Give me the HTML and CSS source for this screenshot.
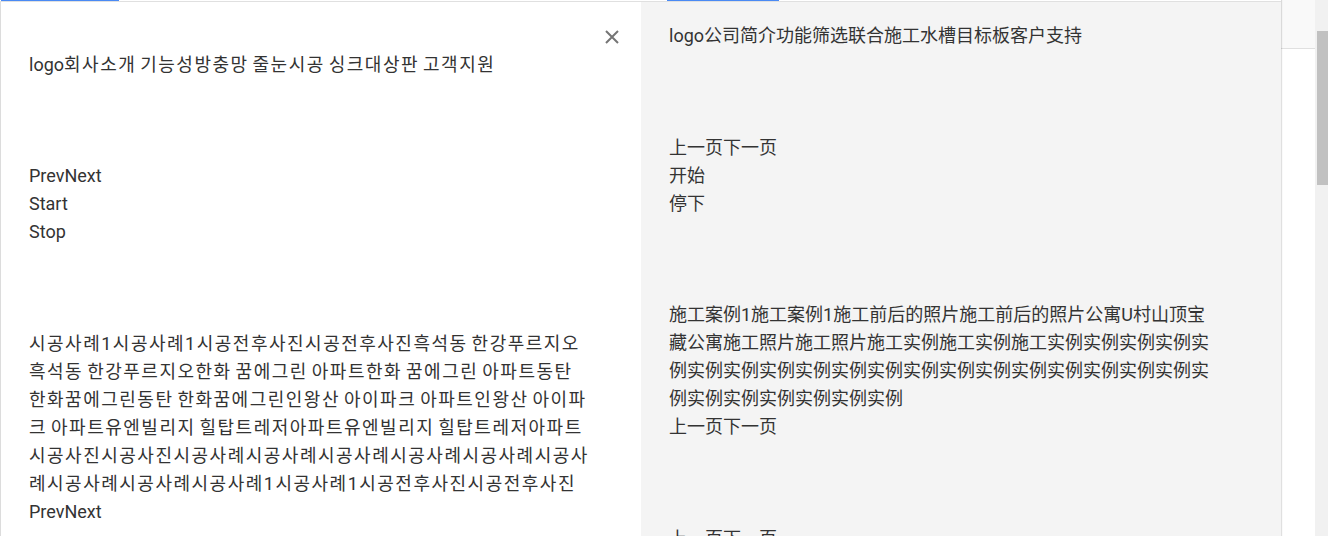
FILE: index.html
```html
<!DOCTYPE html>
<html lang="ko">
<head>
<meta charset="utf-8">
<title>Translation compare</title>
<link rel="stylesheet" href="styles.css">
</head>
<body>
<div class="app">
  <section class="pane pane-left" lang="ko">
    <div class="tabbar"><span class="tab-ind tab-ind-left"></span></div>
    <div class="pane-body body-left">
      <div class="close-row">
        <button class="close" aria-label="close">
          <svg width="14" height="14" viewBox="0 0 14 14"><path d="M1 1L13 13M13 1L1 13" stroke="#757575" stroke-width="2" fill="none"/></svg>
        </button>
      </div>
      <div class="line gap-after-l">logo<span class="ko">회사소개 기능성방충망 줄눈시공 싱크대상판 고객지원</span></div>
      <div class="line">PrevNext</div>
      <div class="line">Start</div>
      <div class="line gap-after">Stop</div>
      <p class="para ko">시공사례1시공사례1시공전후사진시공전후사진흑석동 한강푸르지오<br>흑석동 한강푸르지오한화 꿈에그린 아파트한화 꿈에그린 아파트동탄<br>한화꿈에그린동탄 한화꿈에그린인왕산 아이파크 아파트인왕산 아이파<br>크 아파트유엔빌리지 힐탑트레저아파트유엔빌리지 힐탑트레저아파트<br>시공사진시공사진시공사례시공사례시공사례시공사례시공사례시공사<br>례시공사례시공사례시공사례1시공사례1시공전후사진시공전후사진</p>
      <div class="line">PrevNext</div>
    </div>
  </section>
  <section class="pane pane-right" lang="zh">
    <div class="tabbar"><span class="tab-ind tab-ind-right"></span></div>
    <div class="pane-body body-right">
      <div class="line gap-after">logo公司简介功能筛选联合施工水槽目标板客户支持</div>
      <div class="line">上一页下一页</div>
      <div class="line">开始</div>
      <div class="line gap-after2">停下</div>
      <p class="para">施工案例1施工案例1施工前后的照片施工前后的照片公寓U村山顶宝藏公寓施工照片施工照片施工实例施工实例施工实例实例实例实例实例实例实例实例实例实例实例实例实例实例实例实例实例实例实例实例实例实例实例实例实例实例</p>
      <div class="line gap-after">上一页下一页</div>
      <div class="line">上一页下一页</div>
    </div>
  </section>
  <aside class="side">
    <div class="side-top"></div>
  </aside>
  <div class="scrollbar"><div class="thumb"></div></div>
</div>
</body>
</html>
```
FILE: styles.css
```css
html, body {
  margin: 0;
  padding: 0;
  background: #ffffff;
}
.app {
  display: flex;
  height: 536px;
  overflow: hidden;
  font-size: 18px;
  line-height: 28px;
  color: #333333;
}
.pane {
  display: flex;
  flex-direction: column;
  flex: none;
}
.pane-left {
  width: 641px;
  background: #ffffff;
  font-family: Roboto, "Noto Sans CJK KR", sans-serif;
}
.pane-right {
  width: 640px;
  background: #f4f4f4;
  font-family: Roboto, "Noto Sans CJK SC", sans-serif;
  box-shadow: 1px 0 1px rgba(0,0,0,0.12);
  position: relative;
  z-index: 1;
}
.tabbar {
  height: 1px;
  border-bottom: 1px solid #e0e0e0;
  display: flex;
  flex: none;
  background: #ffffff;
}
.tab-ind {
  display: block;
  width: 112px;
  height: 1px;
  background: #4a8af4;
}
.tab-ind-left {
  margin-left: 1px;
  width: 118px;
}
.tab-ind-right {
  margin-left: 26px;
}
.pane-body {
  flex: 1;
  padding-top: 20px;
}
.body-left {
  border-left: 1px solid #dcdcdc;
  padding-left: 28px;
}
.body-right {
  padding-left: 28px;
}
.close-row {
  height: 29px;
  display: flex;
  justify-content: flex-end;
  align-items: center;
  padding-right: 22px;
}
.close {
  border: 0;
  background: transparent;
  padding: 0;
  width: 14px;
  height: 14px;
  display: flex;
  cursor: pointer;
}
.line {
  height: 28px;
  white-space: nowrap;
}
.ko {
  letter-spacing: 1.5px;
  word-spacing: -2px;
}
.gap-after { margin-bottom: 84px; }
.gap-after-l { margin-bottom: 83px; }
.gap-after2 { margin-bottom: 83px; }
.para {
  margin: 0;
}
.body-left .para {
  width: 590px;
  white-space: nowrap;
}
.body-right .para {
  width: 548px;
}
.side {
  width: 34px;
  flex: none;
  background: #ffffff;
}
.side-top {
  height: 48px;
  background: #f9f9f9;
  border-bottom: 1px solid #e0e0e0;
}
.scrollbar {
  width: 13px;
  flex: none;
  background: #f1f1f1;
  padding-top: 31px;
  padding-left: 2px;
  box-sizing: border-box;
}
.thumb {
  height: 154px;
  background: #c1c1c1;
}
```
